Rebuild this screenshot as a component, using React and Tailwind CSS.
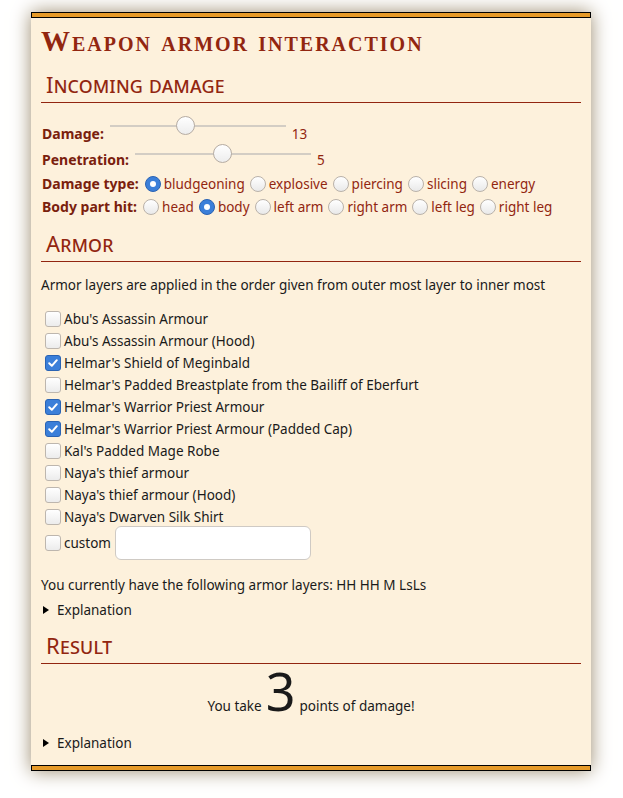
import React from "react";

const Radio = ({ checked }) =>
  checked ? (
    <span className="inline-flex shrink-0 items-center justify-center w-[16px] h-[16px] rounded-full bg-[#3b7fd9] border border-[#2a63b3] ml-[5px] mr-[3px]">
      <span className="w-[6px] h-[6px] rounded-full bg-white" />
    </span>
  ) : (
    <span className="inline-block shrink-0 w-[16px] h-[16px] rounded-full border border-[#b9b2aa] bg-gradient-to-b from-white to-[#e9e9e9] ml-[5px] mr-[3px]" />
  );

const Check = ({ checked }) =>
  checked ? (
    <span className="inline-flex shrink-0 items-center justify-center w-[16px] h-[16px] rounded-[3px] bg-[#3b7fd9] border border-[#2a63b3] ml-[4px] mr-[3px]">
      <svg width="12" height="12" viewBox="0 0 12 12">
        <path d="M2.2 6.2 L4.8 8.8 L9.8 3.2" fill="none" stroke="white" strokeWidth="2" strokeLinecap="round" strokeLinejoin="round" />
      </svg>
    </span>
  ) : (
    <span className="inline-block shrink-0 w-[16px] h-[16px] rounded-[3px] border border-[#bdb6ae] bg-gradient-to-b from-white to-[#ececec] ml-[4px] mr-[3px]" />
  );

const Slider = ({ left }) => (
  <span className="relative inline-block w-[176px] h-[20px] shrink-0 self-start ml-[5px] mr-[6px]">
    <span className="absolute left-0 right-0 top-[9px] h-[2px] bg-[#d3cdc4]" />
    <span
      className="absolute top-0 w-[19px] h-[19px] rounded-full border border-[#b5aca3] bg-gradient-to-b from-white to-[#ededed]"
      style={{ left }}
    />
  </span>
);

const Header = ({ children, className = "" }) => (
  <h2
    className={
      "text-[22px] leading-[28px] text-[#922610] pl-[5px] pb-[4px] border-b border-[#922610] tracking-[0.2px] " +
      className
    }
    style={{ fontVariant: "small-caps", fontFamily: "'Noto Sans', sans-serif" }}
  >
    {children}
  </h2>
);

const Label = ({ children }) => (
  <span className="font-bold text-[14px] text-[#7a200d] pl-[1px] mr-[1px]">{children}</span>
);

const Details = ({ className = "" }) => (
  <div className={"flex items-center h-[20px] " + className}>
    <span className="w-0 h-0 border-y-[4px] border-y-transparent border-l-[6px] border-l-black ml-[2px] mr-[8px]" />
    <span>Explanation</span>
  </div>
);

const armors = [
  ["Abu's Assassin Armour", false],
  ["Abu's Assassin Armour (Hood)", false],
  ["Helmar's Shield of Meginbald", true],
  ["Helmar's Padded Breastplate from the Bailiff of Eberfurt", false],
  ["Helmar's Warrior Priest Armour", true],
  ["Helmar's Warrior Priest Armour (Padded Cap)", true],
  ["Kal's Padded Mage Robe", false],
  ["Naya's thief armour", false],
  ["Naya's thief armour (Hood)", false],
  ["Naya's Dwarven Silk Shirt", false],
];

export default function App() {
  return (
    <div
      className="min-h-[798px] bg-white pt-[12px] pb-[26px] text-[13.5px] leading-[20px] text-[#1a1a1a]"
      style={{ fontFamily: "'Noto Sans', sans-serif" }}
    >
      <div className="ml-[31px] w-[560px] shadow-[0_0_18px_#9b8b6e]">
        <div className="h-[6px] bg-[#e69a28] border border-black" />
        <div className="bg-[#fdf1dc] px-[10px] pt-[7px] pb-[12px]">
          <h1
            className="text-[29px] leading-[32px] font-bold text-[#922610] tracking-[2px]"
            style={{ fontVariant: "small-caps", fontFamily: "'Liberation Serif', serif" }}
          >
            Weapon armor interaction
          </h1>

          <Header className="mt-[13px]">Incoming damage</Header>

          <div className="mt-[13px] text-[#922610]">
            <div className="flex items-end h-[28px]">
              <Label>Damage:</Label>
              <Slider left="66px" />
              <span>13</span>
            </div>
            <div className="flex items-end h-[26px]">
              <Label>Penetration:</Label>
              <Slider left="78px" />
              <span>5</span>
            </div>
            <div className="flex items-end h-[24px]">
              <span className="flex items-center">
                <Label>Damage type:</Label>
                <Radio checked />
                <span>bludgeoning</span>
                <Radio />
                <span>explosive</span>
                <Radio />
                <span>piercing</span>
                <Radio />
                <span>slicing</span>
                <Radio />
                <span>energy</span>
              </span>
            </div>
            <div className="flex items-end h-[23px]">
              <span className="flex items-center">
                <Label>Body part hit:</Label>
                <Radio />
                <span>head</span>
                <Radio checked />
                <span>body</span>
                <Radio />
                <span>left arm</span>
                <Radio />
                <span>right arm</span>
                <Radio />
                <span>left leg</span>
                <Radio />
                <span>right leg</span>
              </span>
            </div>
          </div>

          <Header className="mt-[12px]">Armor</Header>

          <p className="mt-[13px]">
            Armor layers are applied in the order given from outer most layer to inner most
          </p>

          <div className="mt-[13px]">
            {armors.map(([name, c]) => (
              <div key={name} className="flex items-center h-[22px]">
                <Check checked={c} />
                <span>{name}</span>
              </div>
            ))}
            <div className="flex items-center h-[34px] -mt-[2px]">
              <Check />
              <span>custom</span>
              <span className="ml-[4px] w-[196px] h-[34px] rounded-[6px] border border-[#cfcac4] bg-white" />
            </div>
          </div>

          <p className="mt-[15px]">You currently have the following armor layers: HH HH M LsLs</p>
          <Details className="mt-[5px]" />

          <Header className="mt-[11px]">Result</Header>

          <div className="flex items-baseline justify-center -mt-[1px]">
            <span>You take</span>
            <span className="text-[52px] leading-[56px] mx-[4px]">3</span>
            <span>points of damage!</span>
          </div>

          <Details className="mt-[14px]" />
        </div>
        <div className="h-[6px] bg-[#e69a28] border border-black" />
      </div>
    </div>
  );
}
